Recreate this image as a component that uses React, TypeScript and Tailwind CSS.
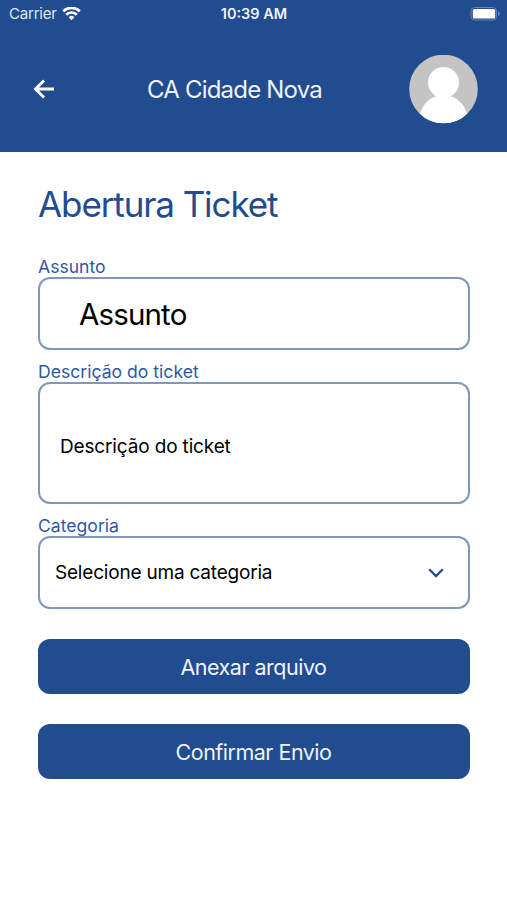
import type { ReactNode } from 'react';

function WifiIcon() {
  return (
    <svg width="19" height="14" viewBox="0 0 19 14" fill="none" stroke="#fff" strokeWidth="2.7">
      <path d="M1.200 4.300a11.800 11.800 0 0 1 16.600 0" />
      <path d="M4.200 7.700a7.500 7.500 0 0 1 10.600 0" />
      <path d="M9.500 13.200 6.600 10.200a4.200 4.200 0 0 1 5.800 0z" fill="#fff" stroke="none" />
    </svg>
  );
}

function BatteryIcon() {
  return (
    <svg width="31" height="14" viewBox="0 0 31 14" fill="none">
      <rect x="1" y="0.500" width="25.500" height="12.500" rx="3.600" stroke="#6883b4" />
      <rect x="2.800" y="2" width="22.400" height="9.400" rx="1.500" fill="#fff" />
      <path d="M28 4.300c1.100.4 1.800 1.300 1.800 2.400s-.7 2-1.800 2.400z" fill="#6883b4" />
    </svg>
  );
}

function Avatar() {
  return (
    <svg width="69" height="69" viewBox="0 0 69 69">
      <defs>
        <clipPath id="avatar">
          <circle cx="34.500" cy="34" r="34.300" />
        </clipPath>
      </defs>
      <g clipPath="url(#avatar)">
        <rect width="69" height="69" fill="#c4c4c4" />
        <circle cx="34.500" cy="27.500" r="15.500" fill="#fff" />
        <path d="M11 58.500C14 49.500 20 43 28 41h13c8 2 14 8.500 17 17.500v10h-47z" fill="#fff" />
      </g>
    </svg>
  );
}

function Field({ label, children, box }: { label: string; children: ReactNode; box: string }) {
  return (
    <div className="flex flex-col">
      <label className="h-[22px] whitespace-nowrap text-[17.600px] leading-[24px] text-[#2f58a0]">{label}</label>
      <div className={`flex items-center rounded-[12px] border-2 border-[#7f97ba] text-black ${box}`}>
        {children}
      </div>
    </div>
  );
}

function Button({ children }: { children: ReactNode }) {
  return (
    <button className="flex h-[55px] w-full items-center justify-center rounded-[12px] bg-[#214c8f] pr-px pt-px text-[21.500px] tracking-[-0.500px] text-[#eef3fb]">
      {children}
    </button>
  );
}

export default function App() {
  return (
    <div className="h-[900px] w-[507px] overflow-hidden bg-white font-['Inter',sans-serif]">
      <header className="flex h-[152px] flex-col bg-[#214c8f] text-white">
        <div className="grid h-[27px] grid-cols-3 items-center pl-[9px] pr-[6px]">
          <div className="flex items-center gap-[5px] text-[15px] tracking-[-0.200px] text-[#dfe7f4]">
            <span className="pt-px">Carrier</span>
            <WifiIcon />
          </div>
          <div className="-ml-[2px] text-center text-[14.500px] font-semibold text-[#eef3fb]">10:39 AM</div>
          <div className="flex justify-end">
            <BatteryIcon />
          </div>
        </div>
        <div className="grid h-[124px] grid-cols-[69px_1fr_69px] items-center pl-[33px] pr-[29px]">
          <svg width="22" height="20" viewBox="0 0 22 20" fill="none" stroke="#fff" strokeWidth="2.800">
            <path d="M21 10H3M11 1.500 2.500 10l8.500 8.500" />
          </svg>
          <h1 className="pr-[42px] pt-px text-center text-[24px] tracking-[-0.800px] text-[#eef3fb]">CA Cidade Nova</h1>
          <Avatar />
        </div>
      </header>
      <main className="pl-[38px] pr-[37px] pt-[28px]">
        <h2 className="h-[48px] text-[35px] leading-[48px] tracking-[-1.100px] text-[#214c8f]">Abertura Ticket</h2>
        <div className="mt-[27px] flex flex-col gap-[10px]">
          <Field label="Assunto" box="h-[73px] pl-[39px] pt-px text-[29.500px] tracking-[-0.850px]">
            <span>Assunto</span>
          </Field>
          <Field label="Descrição do ticket" box="h-[122px] pl-[20px] pt-[8px] text-[19px] tracking-[-0.150px]">
            <span>Descrição do ticket</span>
          </Field>
          <Field label="Categoria" box="h-[73px] justify-between pl-[15px] pr-[24px] pt-px text-[19px] tracking-[-0.200px]">
            <span>Selecione uma categoria</span>
            <svg width="16" height="10" viewBox="0 0 16 10" fill="none" stroke="#214c8f" strokeWidth="2.300">
              <path d="m1.200 1.200 6.800 6.800 6.800-6.800" />
            </svg>
          </Field>
        </div>
        <div className="mt-[30px] flex flex-col gap-[30px]">
          <Button>Anexar arquivo</Button>
          <Button>Confirmar Envio</Button>
        </div>
      </main>
    </div>
  );
}
